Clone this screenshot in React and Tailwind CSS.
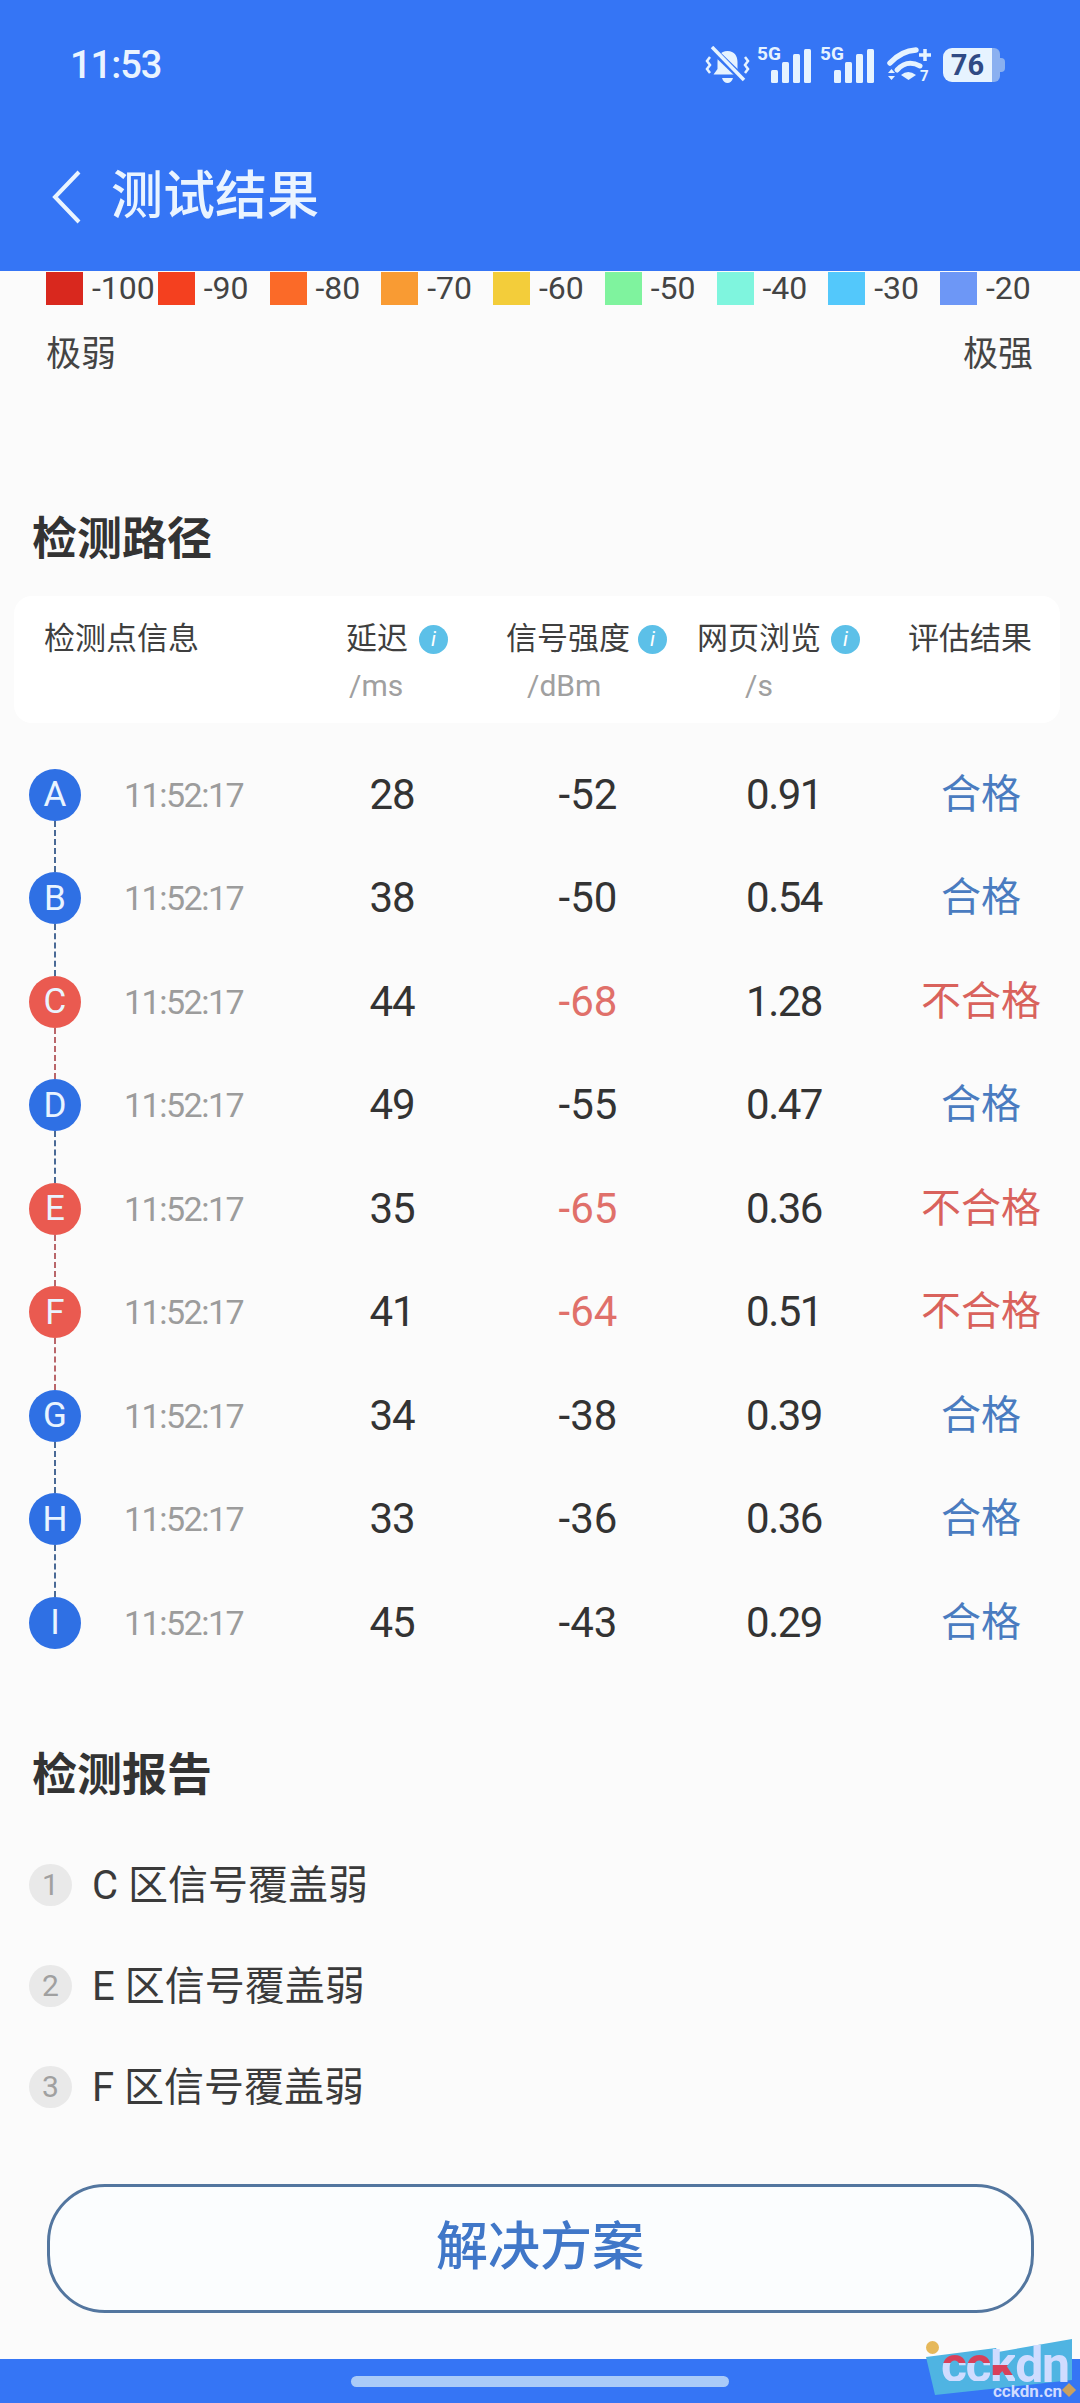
import React from "react";

const legend = [
  ["#d9281e", "-100"], ["#f4401f", "-90"], ["#fb6a28", "-80"], ["#f99b33", "-70"], ["#f3cd3a", "-60"],
  ["#7ff39e", "-50"], ["#7ff5de", "-40"], ["#53c8fb", "-30"], ["#6d97f6", "-20"],
];
const rows = [
  ["A", "28", "-52", "0.91", true], ["B", "38", "-50", "0.54", true], ["C", "44", "-68", "1.28", false],
  ["D", "49", "-55", "0.47", true], ["E", "35", "-65", "0.36", false], ["F", "41", "-64", "0.51", false],
  ["G", "34", "-38", "0.39", true], ["H", "33", "-36", "0.36", true], ["I", "45", "-43", "0.29", true],
];
const report = [["1", "C"], ["2", "E"], ["3", "F"]];

const Info = () => (
  <span className="ml-[11px] flex h-[29px] w-[29px] shrink-0 items-center justify-center rounded-full bg-[#5cc0e8] text-[21px] leading-none italic text-white">i</span>
);

const Bell = () => (
  <svg width="45" height="38" viewBox="0 0 45 38" fill="none" className="shrink-0">
    <path d="M22.5 5c-7 0-10 5-10 11v7l-4 5.500h28l-4-5.500v-7c0-6-3-11-10-11z" fill="#e6f3ff" />
    <path d="M17 32h11c-1 3.500-3 5-5.500 5s-4.500-1.500-5.500-5z" fill="#e6f3ff" />
    <path d="M6 2l33 32" stroke="#3575f5" strokeWidth="7" />
    <path d="M7 1l32 33" stroke="#e6f3ff" strokeWidth="3.500" />
    <path d="M5 11l-3 4 3 4-3 4 3 4M40 11l3 4-3 4 3 4-3 4" stroke="#e6f3ff" strokeWidth="2.500" />
  </svg>
);

const Signal = () => (
  <span className="relative block h-[38px] w-[55px] shrink-0">
    <span className="absolute left-0 top-[-3px] text-[19px] leading-[22px] font-bold text-[#e6f3ff]">5G</span>
    <svg width="55" height="38" viewBox="0 0 55 38" className="absolute left-0 top-0">
      <rect x="14" y="24" width="7" height="13" rx="1.500" fill="#e6f3ff" />
      <rect x="25" y="16" width="7" height="21" rx="1.500" fill="#e6f3ff" />
      <rect x="36" y="8" width="7" height="29" rx="1.500" fill="#e6f3ff" />
      <rect x="47" y="3" width="7" height="34" rx="1.500" fill="#e6f3ff" />
    </svg>
  </span>
);

const Wifi = () => (
  <span className="relative block h-[38px] w-[46px] shrink-0">
    <svg width="46" height="38" viewBox="0 0 46 38" className="absolute top-0 left-0" fill="none">
      <path d="M3 17Q14 5 29 4" stroke="#e6f3ff" strokeWidth="5.500" strokeLinecap="round" />
      <path d="M10 24Q20 13 33 20" stroke="#e6f3ff" strokeWidth="5" strokeLinecap="round" />
      <path d="M14 29Q21 23 29 29L21.500 34z" fill="#e6f3ff" />
      <path d="M1 27l3.500-4 3.500 4zM1 30l3.500 4 3.500-4z" fill="#e6f3ff" />
      <path d="M38 3v12M32 9h12" stroke="#e6f3ff" strokeWidth="3.500" />
    </svg>
    <span className="absolute top-[21px] left-[33px] text-[15px] leading-[18px] font-bold text-[#e6f3ff]">7</span>
  </span>
);

const Battery = () => (
  <span className="relative flex h-[34px] w-[62px] shrink-0 items-center">
    <span className="flex h-[34px] w-[49px] items-center justify-center rounded-l-[9px] bg-[#e6f3ff] text-[29px] leading-none font-bold text-[#2f4a85]">76</span>
    <span className="h-[34px] w-[8px] rounded-r-[6px] bg-[#8ab0f0]" />
    <span className="h-[14px] w-[5px] rounded-r-[4px] bg-[#8ab0f0]" />
  </span>
);

export default function App() {
  return (
    <div className="relative flex h-[2403px] w-[1080px] flex-col overflow-hidden bg-[#fbfbfb] font-['Roboto','Noto_Sans_CJK_SC',sans-serif] text-[#3a3a3a]">
      <header className="h-[271px] shrink-0 bg-[#3575f5] text-[#eaf4ff]">
        <div className="flex items-center justify-between pt-[45px] pr-[75px] pl-[70px]">
          <span className="text-[38px] leading-[40px] font-medium tracking-[-1px]">11:53</span>
          <div className="flex items-center">
            <Bell />
            <span className="ml-[7px]"><Signal /></span>
            <span className="ml-[8px]"><Signal /></span>
            <span className="ml-[12px]"><Wifi /></span>
            <span className="ml-[10px]"><Battery /></span>
          </div>
        </div>
        <div className="mt-[82px] flex items-center pl-[52px]">
          <svg width="30" height="54" viewBox="0 0 30 54" fill="none" className="shrink-0">
            <path d="M27 2L3 27l24 25" stroke="#eaf4ff" strokeWidth="4" />
          </svg>
          <h1 className="ml-[29px] text-[52px] leading-[60px] font-medium">测试结果</h1>
        </div>
      </header>

      <div className="mt-[1px] flex h-[33px] pl-[46px]">
        {legend.map(([c, t]) => (
          <div key={t} className="flex w-[111.750px] shrink-0 items-center">
            <span className="h-[33px] w-[37px] shrink-0" style={{ backgroundColor: c }} />
            <span className="ml-[9px] text-[32px] leading-[33px] text-[#444]">{t}</span>
          </div>
        ))}
      </div>
      <div className="mt-[30px] flex justify-between pr-[47px] pl-[46px] text-[35px] leading-[40px] text-[#444]">
        <span>极弱</span>
        <span>极强</span>
      </div>

      <h2 className="mt-[135px] pl-[32px] text-[45px] leading-[60px] font-bold text-[#333]">检测路径</h2>

      <div className="mt-[26px] ml-[14px] grid h-[127px] w-[1046px] grid-cols-[302px_160px_191px_211px_1fr] rounded-[18px] bg-white pt-[23px] pl-[30px] text-[31px] leading-[40px] text-[#3f3f3f]">
        <div>检测点信息</div>
        <div>
          <div className="flex items-center">延迟<Info /></div>
          <div className="mt-[7px] ml-[3px] text-[30px] text-[#a0a0a0]">/ms</div>
        </div>
        <div>
          <div className="flex items-center">信号强度<span className="-ml-[3px]"><Info /></span></div>
          <div className="mt-[7px] ml-[21px] text-[30px] text-[#a0a0a0]">/dBm</div>
        </div>
        <div>
          <div className="flex items-center">网页浏览<span className="-ml-[1px]"><Info /></span></div>
          <div className="mt-[7px] ml-[48px] text-[30px] text-[#a0a0a0]">/s</div>
        </div>
        <div>评估结果</div>
      </div>

      <div className="mt-[20px] pl-[29px]">
        {rows.map(([l, a, b, c, ok], i) => (
          <div key={l} className="grid h-[103.500px] grid-cols-[95px_170px_196px_196px_196px_1fr] items-center text-center text-[42px] leading-[50px] text-[#333]">
            <div className={`relative flex h-[52px] w-[52px] items-center justify-center rounded-full text-[35px] leading-none text-[#e9f4ff] ${ok ? "bg-[#2f70e4]" : "bg-[#ea5a50]"}`}>
              {l}
              {i < rows.length - 1 && (
                <span className={`absolute top-[52px] left-[25px] h-[51.500px] border-l-2 border-dashed ${ok ? "border-[#4a6a96]" : "border-[#b9666a]"}`} />
              )}
            </div>
            <div className="text-left text-[34px] tracking-[-1.500px] text-[#9c9c9c]">11:52:17</div>
            <div className="tracking-[-1px]">{a}</div>
            <div className={ok ? "" : "text-[#e0706a]"}>{b}</div>
            <div className="tracking-[-1.500px]">{c}</div>
            <div className={`text-[40px] ${ok ? "text-[#4a7cc0]" : "text-[#d9625c]"}`}>{ok ? "合格" : "不合格"}</div>
          </div>
        ))}
      </div>

      <h2 className="mt-[71px] pl-[32px] text-[45px] leading-[60px] font-bold text-[#333]">检测报告</h2>

      <div className="mt-[30px] pl-[29px]">
        {report.map(([n, l]) => (
          <div key={n} className="flex h-[101px] items-center">
            <span className="flex h-[42px] w-[43px] shrink-0 -translate-y-[1px] items-center justify-center rounded-full bg-[#e9e9e9] text-[30px] leading-none text-[#a0a0a0]">{n}</span>
            <span className="ml-[20px] text-[40px] leading-[50px] text-[#3a3a3a]">{l} 区信号覆盖弱</span>
          </div>
        ))}
      </div>

      <button className="mx-auto mt-[45px] flex h-[129px] w-[987px] shrink-0 items-center justify-center rounded-[58px] border-[3px] border-[#53769f] bg-[#fbfdfe] text-[52px] font-medium text-[#4077c8]">
        解决方案
      </button>

      <div className="mt-auto flex h-[44px] shrink-0 justify-center bg-[#3575f5] pt-[17px]">
        <span className="h-[11px] w-[378px] rounded-full bg-[#a9cbf8]" />
      </div>

      <div className="absolute top-[2339px] left-[926px] h-[64px] w-[150px]">
        <svg width="150" height="60" viewBox="0 0 150 60" className="absolute top-0 left-0">
          <path d="M0 18L70 9l2 4 74-13v41L9 56z" fill="#4fb4e2" />
        </svg>
        <span className="absolute top-[2px] left-[0px] h-[13px] w-[13px] rounded-full bg-[#e6b85a]" />
        <span className="absolute top-[10px] left-[15px] flex text-[50px] leading-[32px] font-bold tracking-[-1.500px] text-[#cfdcff]">
          <span className="bg-[linear-gradient(to_bottom,#d8405a_0,#d8405a_45%,#cfdcff_45%)] bg-clip-text text-transparent">cc</span>
          <span className="bg-[linear-gradient(to_bottom,#cfdcff_0,#cfdcff_50%,#d8405a_50%,#d8405a_80%,#cfdcff_80%)] bg-clip-text text-transparent">k</span>
          <span>dn</span>
        </span>
        <span className="absolute top-[43px] left-[67px] text-[17px] leading-[19px] font-bold text-[#cfdcff]">cckdn.cn</span>
        <span className="absolute top-[46px] left-[138px] h-[10px] w-[10px] rotate-45 bg-[#c8a060]" />
      </div>
    </div>
  );
}
